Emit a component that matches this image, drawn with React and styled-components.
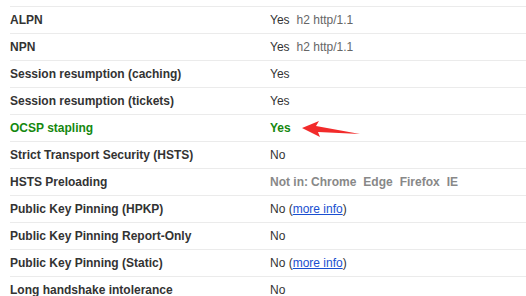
import React from "react";
import styled, { createGlobalStyle } from "styled-components";

const Global = createGlobalStyle`
  html, body { margin: 0; padding: 0; background: #fff; }
  body { font-family: "Liberation Sans", Arial, sans-serif; font-size: 12px; color: #333; }
`;

const Page = styled.div`
  padding: 6px 0 0 10px;
  width: 516px;
  height: 290px;
  overflow: hidden;
`;

const Table = styled.div`
  display: grid;
  grid-template-columns: 260px 1fr;
`;

const Row = styled.div`
  display: contents;
`;

const Cell = styled.div`
  position: relative;
  height: 26px;
  border-top: 1px solid #ebebeb;
  display: flex;
  align-items: center;
  line-height: 16px;
  white-space: pre;
  font-weight: ${(p) => (p.$label || p.$good ? "bold" : "normal")};
  color: ${(p) => (p.$good ? "#15880f" : "#333")};
`;

const Muted = styled.span`
  color: #666;
  margin-left: 7px;
`;

const NotIn = styled.span`
  color: #888;
  font-weight: bold;
`;

const Browser = styled.span`
  margin-left: ${(p) => (p.$first ? "3px" : "7px")};
`;

const Link = styled.a`
  color: #1a4fd0;
  text-decoration: underline;
`;

const Arrow = styled.svg`
  position: absolute;
  left: 32px;
  top: 5px;
  overflow: visible;
`;

function PointerArrow() {
  return (
    <Arrow width="60" height="18" viewBox="0 0 60 18">
      {/* red callout arrow pointing left */}
      <polygon points="0,8 17,1 14,6 58,14 16,12 18,17" fill="#f22b2b" />
    </Arrow>
  );
}

const browsers = ["Chrome", "Edge", "Firefox", "IE"];

const rows = [
  { label: "ALPN", value: <>Yes<Muted>h2 http/1.1</Muted></> },
  { label: "NPN", value: <>Yes<Muted>h2 http/1.1</Muted></> },
  { label: "Session resumption (caching)", value: "Yes" },
  { label: "Session resumption (tickets)", value: "Yes" },
  { label: "OCSP stapling", value: "Yes", good: true, arrow: true },
  { label: "Strict Transport Security (HSTS)", value: "No" },
  {
    label: "HSTS Preloading",
    value: (
      <NotIn>
        Not in:
        {browsers.map((b, i) => (
          <Browser key={b} $first={i === 0}>{b}</Browser>
        ))}
      </NotIn>
    ),
  },
  {
    label: "Public Key Pinning (HPKP)",
    value: <>No (<Link href="#">more info</Link>)</>,
  },
  { label: "Public Key Pinning Report-Only", value: "No" },
  {
    label: "Public Key Pinning (Static)",
    value: <>No (<Link href="#">more info</Link>)</>,
  },
  { label: "Long handshake intolerance", value: "No" },
];

export default function App() {
  return (
    <>
      <Global />
      <Page>
        <Table>
          {rows.map((r) => (
            <Row key={r.label}>
              <Cell $label $good={r.good}>{r.label}</Cell>
              <Cell $good={r.good}>
                {r.value}
                {r.arrow && <PointerArrow />}
              </Cell>
            </Row>
          ))}
        </Table>
      </Page>
    </>
  );
}
